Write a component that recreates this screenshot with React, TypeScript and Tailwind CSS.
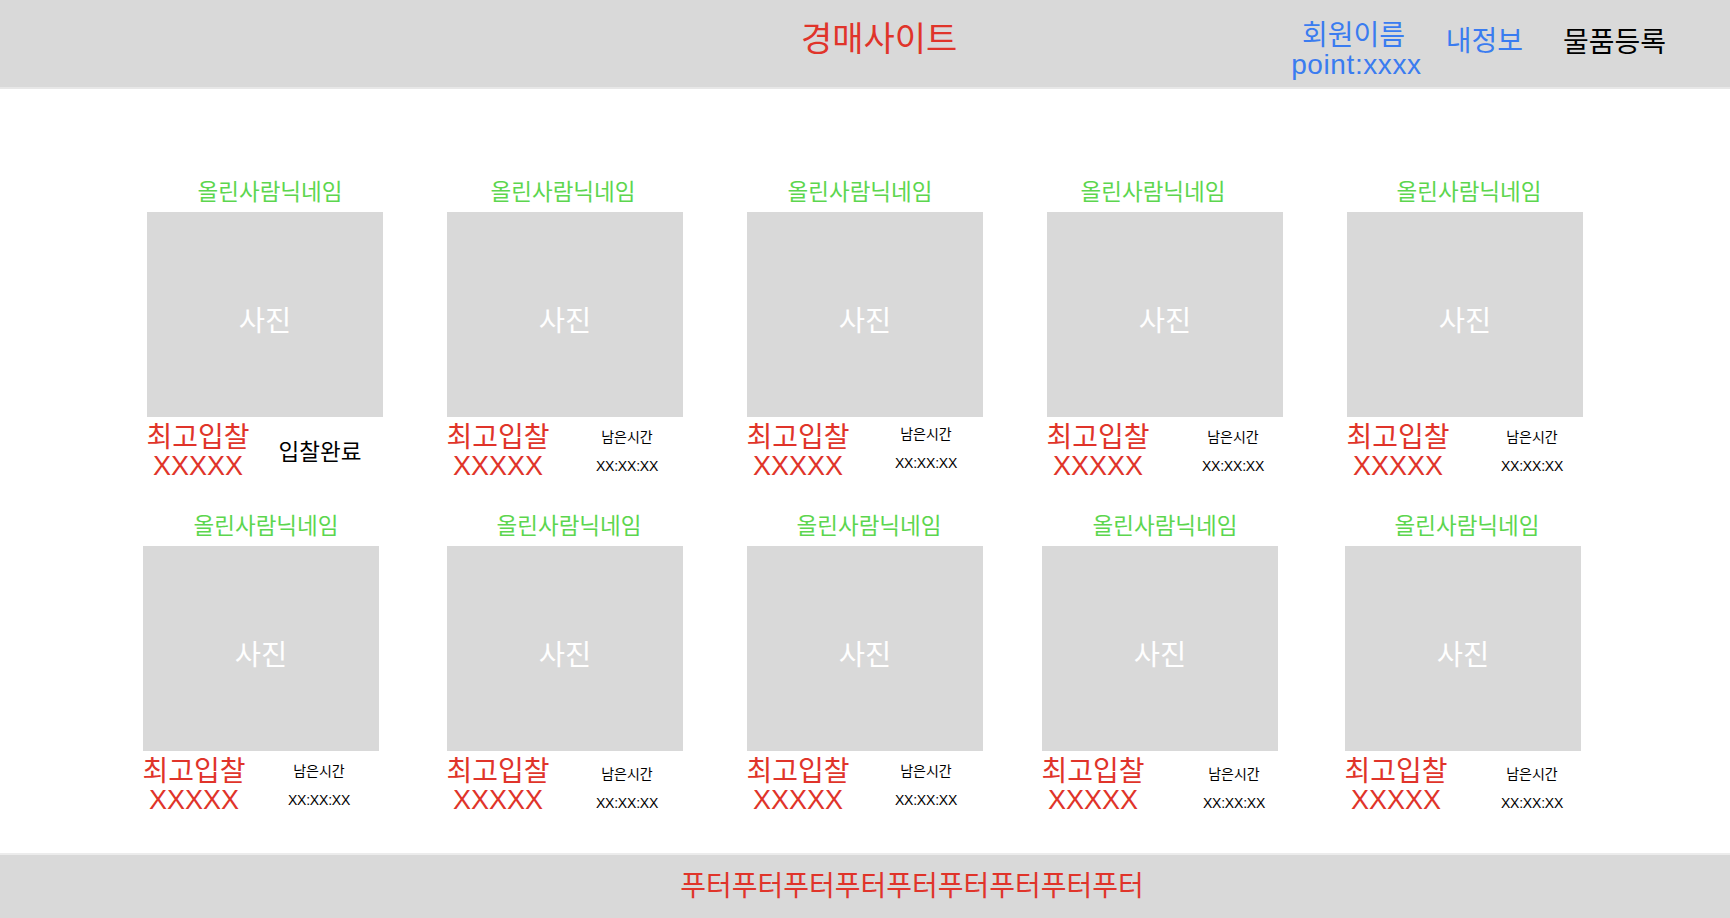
import React from "react";

type Card = {
  kind: "done" | "timer";
  nick: string; // nickname nudge
  body: string; // image + info nudge
  timer: string; // timer block nudge
};

const cards: Card[] = [
  { kind: "done", nick: "translate-x-[5px]", body: "", timer: "" },
  { kind: "timer", nick: "-translate-x-[2px]", body: "", timer: "-translate-x-[2px]" },
  { kind: "timer", nick: "-translate-x-[5px]", body: "", timer: "-translate-x-[3px] -translate-y-[3px]" },
  { kind: "timer", nick: "-translate-x-[12px]", body: "", timer: "translate-x-[4px]" },
  { kind: "timer", nick: "translate-x-[4px]", body: "", timer: "translate-x-[3px]" },
  { kind: "timer", nick: "translate-x-[1px]", body: "-ml-[4px]", timer: "-translate-x-[6px]" },
  { kind: "timer", nick: "translate-x-[4px]", body: "", timer: "-translate-x-[2px] translate-y-[3px]" },
  { kind: "timer", nick: "translate-x-[4px]", body: "", timer: "-translate-x-[3px]" },
  { kind: "timer", nick: "", body: "-ml-[5px]", timer: "translate-x-[10px] translate-y-[3px]" },
  { kind: "timer", nick: "translate-x-[2px]", body: "-ml-[2px]", timer: "translate-x-[5px] translate-y-[3px]" },
];

function AuctionCard({ card }: { card: Card }) {
  return (
    <div className="flex flex-col w-[236px]">
      <div
        className={`text-center text-[22.5px] leading-[26px] text-[#5CD64E] mb-[6px] whitespace-nowrap ${card.nick}`}
      >
        올린사람닉네임
      </div>
      <div className={`flex flex-col ${card.body}`}>
        <div className="h-[205px] w-[236px] bg-[#d9d9d9] flex items-center justify-center pt-[12px]">
          <span className="text-white text-[28.5px] leading-[32px]">사진</span>
        </div>
        <div className="flex mt-[6px]">
          <div className="w-[102px] shrink-0 flex flex-col items-center text-[#E0342A] whitespace-nowrap">
            <span className="text-[28px] leading-[29px]">최고입찰</span>
            <span className="text-[27px] leading-[29px]">XXXXX</span>
          </div>
          {card.kind === "done" ? (
            <div className="w-[142px] shrink-0 flex items-center justify-center text-black text-[22.5px] leading-[29px] whitespace-nowrap">
              입찰완료
            </div>
          ) : (
            <div
              className={`w-[160px] shrink-0 flex flex-col items-center text-black whitespace-nowrap ${card.timer}`}
            >
              <span className="text-[14px] leading-[29px]">남은시간</span>
              <span className="text-[14px] leading-[29px] tracking-[-0.2px]">XX:XX:XX</span>
            </div>
          )}
        </div>
      </div>
    </div>
  );
}

export default function App() {
  return (
    <div
      className="w-full h-[918px] flex flex-col bg-white overflow-hidden"
      style={{ fontFamily: "'Liberation Sans', 'Noto Sans CJK KR', sans-serif" }}
    >
      <header className="h-[89px] shrink-0 bg-[#d9d9d9] border-b-2 border-[#e7e7e7] flex items-start pl-[801px] pr-[64px] whitespace-nowrap">
        <div className="mt-[19px] text-[34px] leading-[40px] text-[#E0342A]">경매사이트</div>
        <div className="ml-auto flex items-start">
          <div className="mt-[22px] flex flex-col items-center text-[#3A7CF0]">
            <span className="text-[28px] leading-[28px] -translate-x-[3px]">회원이름</span>
            <span className="text-[28px] leading-[29px] tracking-[0.6px]">point:xxxx</span>
          </div>
          <div className="ml-[24px] mt-[27px] text-[28px] leading-[30px] text-[#3A7CF0]">내정보</div>
          <div className="ml-[40px] mt-[28px] text-[28px] leading-[30px] text-black">물품등록</div>
        </div>
      </header>

      <main className="flex-1 pt-[91px]">
        <div className="grid grid-cols-[repeat(5,236px)] gap-x-[64px] gap-y-[33px] justify-center">
          {cards.map((c, i) => (
            <AuctionCard key={i} card={c} />
          ))}
        </div>
      </main>

      <footer className="h-[65px] shrink-0 bg-[#d9d9d9] border-t-2 border-[#ececec] flex items-center justify-center pl-[94px]">
        <span className="text-[28px] leading-[30px] text-[#E0342A] whitespace-nowrap">
          푸터푸터푸터푸터푸터푸터푸터푸터푸터
        </span>
      </footer>
    </div>
  );
}
